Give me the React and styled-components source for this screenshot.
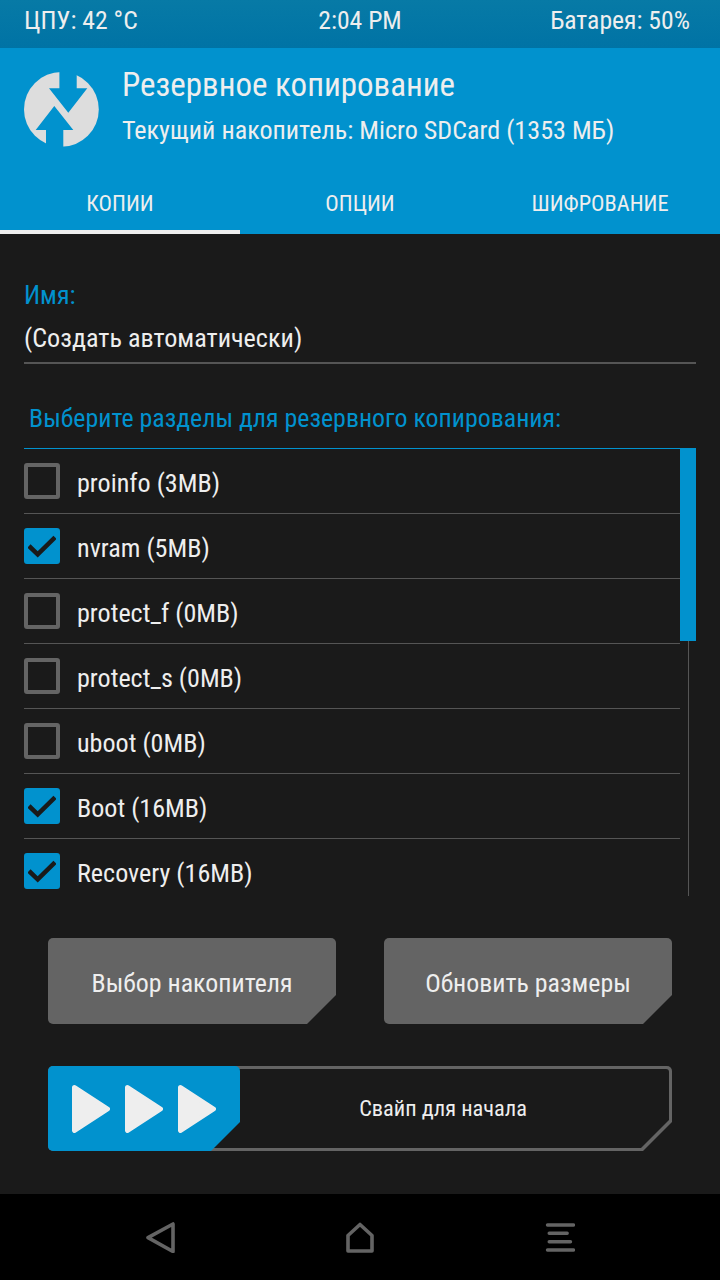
import styled, { createGlobalStyle } from 'styled-components';

const BLUE = '#0192ce';
const DARK = '#1a1a1a';
const GREY = '#646464';
const TEXT = '#eeeeee';

const GlobalStyle = createGlobalStyle`
  html, body { margin: 0; padding: 0; background: ${DARK}; }
  body { font-family: Roboto, sans-serif; font-stretch: 75%; color: ${TEXT}; }
  * { box-sizing: border-box; }
`;

const Screen = styled.div`
  width: 720px;
  height: 1280px;
  display: flex;
  flex-direction: column;
  overflow: hidden;
`;

const StatusBar = styled.div`
  height: 48px;
  padding: 0 30px 8px 24px;
  display: grid;
  grid-template-columns: 1fr auto 1fr;
  align-items: center;
  font-size: 25.7px;
  background: linear-gradient(#077aa6, #0073a5);
`;

const StatusClock = styled.span`
  position: relative;
  left: 3px;
`;

const StatusRight = styled.span`
  text-align: right;
`;

const Header = styled.header`
  height: 186px;
  background: ${BLUE};
  display: flex;
  flex-direction: column;
`;

const Brand = styled.div`
  height: 131px;
  padding: 24px 0 0 24px;
  display: flex;
  gap: 23px;
`;

const TitleBlock = styled.div`
  display: flex;
  flex-direction: column;
  margin-top: -7px;
`;

const Title = styled.h1`
  margin: 0;
  font-size: 33px;
  line-height: 40px;
  font-weight: 400;
`;

const Subtitle = styled.div`
  margin-top: 10px;
  font-size: 26.1px;
  line-height: 30px;
`;

const Tabs = styled.nav`
  flex: 1;
  display: grid;
  grid-template-columns: repeat(3, 1fr);
`;

const Tab = styled.div`
  display: flex;
  align-items: center;
  justify-content: center;
  font-size: 22.4px;
  padding-bottom: 4px;
  border-bottom: 4px solid ${(p) => (p.$active ? TEXT : 'transparent')};
`;

const Content = styled.main`
  flex: 1;
  padding: 44px 24px 0;
  display: flex;
  flex-direction: column;
`;

const FieldLabel = styled.div`
  color: ${BLUE};
  font-size: 26px;
  line-height: 34px;
`;

const FieldValue = styled.div`
  height: 52px;
  padding-top: 9px;
  font-size: 26.2px;
  line-height: 34px;
  border-bottom: 2px solid #555555;
`;

const ListTitle = styled.div`
  color: ${BLUE};
  font-size: 25.9px;
  line-height: 34px;
  margin: 37px 0 13px 5px;
`;

const ListWrap = styled.div`
  height: 448px;
  display: flex;
  border-top: 1px solid ${BLUE};
  overflow: hidden;
`;

const List = styled.div`
  width: 656px;
  flex: none;
`;

const Row = styled.div`
  height: 65px;
  display: flex;
  align-items: center;
  gap: 17px;
  font-size: 26.1px;
  padding-bottom: 1px;
  border-bottom: 1px solid #555555;
`;

const RowLabel = styled.span`
  position: relative;
  top: 2px;
`;

const Box = styled.div`
  width: 36px;
  height: 36px;
  flex: none;
  border-radius: 3px;
  border: 4px solid ${(p) => (p.$checked ? BLUE : GREY)};
  background: ${(p) => (p.$checked ? BLUE : 'transparent')};
  display: flex;
  align-items: center;
  justify-content: center;
`;

const ScrollTrack = styled.div`
  position: relative;
  width: 16px;
  flex: none;
  &::before {
    content: '';
    position: absolute;
    left: 8px;
    top: 0;
    bottom: 0;
    width: 1px;
    background: #555555;
  }
`;

const ScrollThumb = styled.div`
  position: relative;
  height: 192px;
  background: ${BLUE};
`;

const Buttons = styled.div`
  margin: 42px 24px 0;
  display: flex;
  justify-content: space-between;
`;

const CUT = 'polygon(0 0, 100% 0, 100% calc(100% - 29px), calc(100% - 29px) 100%, 0 100%)';

const Button = styled.div`
  width: 288px;
  height: 86px;
  border-radius: 5px;
  background: ${GREY};
  clip-path: ${CUT};
  display: flex;
  align-items: center;
  justify-content: center;
  font-size: 25.9px;
  padding-top: 4px;
`;

const Swipe = styled.div`
  position: relative;
  margin: 42px 24px 0;
  height: 85px;
  display: flex;
  border-radius: 5px;
  background: ${GREY};
  clip-path: ${CUT};
  &::before {
    content: '';
    position: absolute;
    inset: 3px;
    border-radius: 3px;
    background: ${DARK};
    clip-path: polygon(0 0, 100% 0, 100% calc(100% - 28px), calc(100% - 28px) 100%, 0 100%);
  }
`;

const Handle = styled.div`
  position: relative;
  width: 192px;
  flex: none;
  border-radius: 5px;
  background: ${BLUE};
  clip-path: ${CUT};
  padding-left: 24px;
  display: flex;
  align-items: center;
  gap: 15px;
`;

const SwipeLabel = styled.div`
  position: relative;
  flex: 1;
  display: flex;
  align-items: center;
  justify-content: center;
  font-size: 22.4px;
  padding: 0 26px 2px 0;
`;

const NavBar = styled.footer`
  height: 86px;
  background: #000000;
  display: flex;
  align-items: center;
  justify-content: space-between;
  padding: 0 145px;
`;

const Logo = () => (
  <svg width="75" height="75" viewBox="0 0 75 75">
    <circle cx="37.4" cy="37.4" r="37.4" fill="#dddddd" />
    <path d="M35.4 -2V16.3H25L44.3 40.7L63.3 16.3H52.7V-2Z" fill={BLUE} />
    <path d="M30.3 34L11.7 58H22V80H39.3V58H49.3Z" fill={BLUE} />
  </svg>
);

const Check = () => (
  <svg width="28" height="24" viewBox="0 0 28 24">
    <path d="M1 12L9.7 20.3L27 3.3" fill="none" stroke={DARK} strokeWidth="4.5" />
  </svg>
);

const Chevron = () => (
  <svg width="38" height="48" viewBox="0 0 38 48">
    <path d="M2.5 2.5L35.5 24L2.5 45.5Z" fill={TEXT} stroke={TEXT} strokeWidth="5" strokeLinejoin="round" />
  </svg>
);

const BackIcon = () => (
  <svg width="30" height="32" viewBox="0 0 30 32">
    <path d="M3 16.7L28 3V30.5Z" fill="none" stroke={GREY} strokeWidth="3.6" strokeLinejoin="round" />
  </svg>
);

const HomeIcon = () => (
  <svg width="30" height="32" viewBox="0 0 30 32">
    <path d="M3 30V14.5L15 3.5L27 14.5V30Z" fill="none" stroke={GREY} strokeWidth="3.6" strokeLinejoin="round" />
  </svg>
);

const MenuIcon = () => (
  <svg width="30" height="32" viewBox="0 0 30 32">
    <path d="M2.5 4H28.5M4.2 12.3H22.2M4.2 20.7H25.5M2.5 29H28.5" fill="none" stroke={GREY} strokeWidth="3.4" strokeLinecap="round" />
  </svg>
);

const partitions = [
  ['proinfo (3MB)', false],
  ['nvram (5MB)', true],
  ['protect_f (0MB)', false],
  ['protect_s (0MB)', false],
  ['uboot (0MB)', false],
  ['Boot (16MB)', true],
  ['Recovery (16MB)', true],
];

export default function App() {
  return (
    <Screen>
      <GlobalStyle />
      <StatusBar>
        <span>ЦПУ: 42 °C</span>
        <StatusClock>2:04 PM</StatusClock>
        <StatusRight>Батарея: 50%</StatusRight>
      </StatusBar>
      <Header>
        <Brand>
          <Logo />
          <TitleBlock>
            <Title>Резервное копирование</Title>
            <Subtitle>Текущий накопитель: Micro SDCard (1353 МБ)</Subtitle>
          </TitleBlock>
        </Brand>
        <Tabs>
          <Tab $active>КОПИИ</Tab>
          <Tab>ОПЦИИ</Tab>
          <Tab>ШИФРОВАНИЕ</Tab>
        </Tabs>
      </Header>
      <Content>
        <FieldLabel>Имя:</FieldLabel>
        <FieldValue>(Создать автоматически)</FieldValue>
        <ListTitle>Выберите разделы для резервного копирования:</ListTitle>
        <ListWrap>
          <List>
            {partitions.map(([name, checked]) => (
              <Row key={name}>
                <Box $checked={checked}>{checked && <Check />}</Box>
                <RowLabel>{name}</RowLabel>
              </Row>
            ))}
          </List>
          <ScrollTrack>
            <ScrollThumb />
          </ScrollTrack>
        </ListWrap>
        <Buttons>
          <Button>Выбор накопителя</Button>
          <Button>Обновить размеры</Button>
        </Buttons>
        <Swipe>
          <Handle>
            <Chevron />
            <Chevron />
            <Chevron />
          </Handle>
          <SwipeLabel>Свайп для начала</SwipeLabel>
        </Swipe>
      </Content>
      <NavBar>
        <BackIcon />
        <HomeIcon />
        <MenuIcon />
      </NavBar>
    </Screen>
  );
}
